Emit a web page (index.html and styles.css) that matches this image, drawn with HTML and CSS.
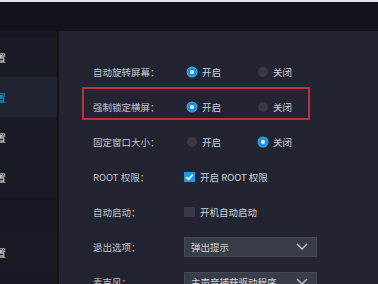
FILE: index.html
```html
<!DOCTYPE html>
<html lang="zh-CN">
<head>
<meta charset="utf-8">
<title>设置</title>
<link rel="stylesheet" href="styles.css">
</head>
<body>
<div class="topline"></div>
<div class="header"></div>
<div class="main">
  <nav class="sidebar">
    <div class="nav-item"><span class="nav-text">基本设置</span></div>
    <div class="nav-item active"><span class="nav-text">高级设置</span></div>
    <div class="nav-item"><span class="nav-text">性能设置</span></div>
    <div class="nav-item"><span class="nav-text">游戏设置</span></div>
    <div class="nav-gap"></div>
    <div class="nav-item"><span class="nav-text">其他设置</span></div>
  </nav>
  <section class="content">
    <div class="row">
      <div class="label">自动旋转屏幕：</div>
      <div class="controls">
        <div class="option"><span class="radio on"></span>开启</div>
        <div class="option"><span class="radio"></span>关闭</div>
      </div>
    </div>
    <div class="row highlighted">
      <div class="label">强制锁定横屏：</div>
      <div class="controls">
        <div class="option"><span class="radio on"></span>开启</div>
        <div class="option"><span class="radio"></span>关闭</div>
      </div>
    </div>
    <div class="row">
      <div class="label">固定窗口大小：</div>
      <div class="controls">
        <div class="option"><span class="radio"></span>开启</div>
        <div class="option"><span class="radio on"></span>关闭</div>
      </div>
    </div>
    <div class="row">
      <div class="label">ROOT 权限：</div>
      <div class="controls">
        <div class="check-option"><span class="checkbox on"><svg viewBox="0 0 11 10" width="11" height="10"><path d="M2.3 5.2 L4.5 7.3 L8.8 2.6" fill="none" stroke="#ffffff" stroke-width="1.6"/></svg></span>开启 ROOT 权限</div>
      </div>
    </div>
    <div class="row">
      <div class="label">自动启动：</div>
      <div class="controls">
        <div class="check-option"><span class="checkbox"></span>开机自动启动</div>
      </div>
    </div>
    <div class="row">
      <div class="label">退出选项：</div>
      <div class="controls">
        <div class="select"><span>弹出提示</span><svg class="chev" viewBox="0 0 12 7" width="12" height="7"><path d="M1 1 L6 6 L11 1" fill="none" stroke="#c9ccd4" stroke-width="1.3"/></svg></div>
      </div>
    </div>
    <div class="row">
      <div class="label">麦克风：</div>
      <div class="controls">
        <div class="select"><span>主声音捕获驱动程序</span><svg class="chev" viewBox="0 0 12 7" width="12" height="7"><path d="M1 1 L6 6 L11 1" fill="none" stroke="#c9ccd4" stroke-width="1.3"/></svg></div>
      </div>
    </div>
  </section>
</div>
</body>
</html>
```

FILE: styles.css
```css
html, body {
  margin: 0;
  padding: 0;
}
body {
  width: 378px;
  height: 284px;
  overflow: hidden;
  background: #11131b;
  font-family: "Noto Sans CJK SC", "Noto Sans", sans-serif;
  font-size: 9.5px;
  color: #c2c4cb;
}
.topline {
  height: 2px;
  background: #e6e7ea;
}
.header {
  height: 29px;
  background: #12141c;
}
.main {
  display: flex;
  height: 253px;
  overflow: hidden;
}
.sidebar {
  width: 57px;
  margin-right: 2px;
  background: #161821;
  padding-top: 6px;
  display: flex;
  flex-direction: column;
}
.nav-item {
  height: 40px;
  flex: none;
  display: flex;
  align-items: center;
  overflow: hidden;
  background: #181a24;
  color: #e2e3e7;
  font-size: 10px;
}
.nav-item.active {
  background: #212433;
  color: #2a9be0;
}
.nav-text {
  margin-left: -34px;
  white-space: nowrap;
}
.nav-gap {
  height: 35px;
  flex: none;
}
.content {
  flex: 1;
  background: #222531;
  padding: 23px 0 0 34px;
  display: flex;
  flex-direction: column;
  overflow: hidden;
}
.row {
  height: 35px;
  flex: none;
  display: flex;
  align-items: center;
  position: relative;
}
.row.highlighted::after {
  content: "";
  position: absolute;
  left: -11px;
  top: -2px;
  width: 224px;
  height: 29px;
  border: 2px solid #b8333b;
}
.label {
  width: 91px;
  white-space: nowrap;
}
.controls {
  display: flex;
  align-items: center;
}
.option {
  width: 68px;
  margin-left: 3px;
  display: flex;
  align-items: center;
  gap: 5px;
  color: #d0d2d8;
}
.radio {
  width: 10px;
  height: 10px;
  border-radius: 50%;
  background: #383b47;
  display: flex;
  align-items: center;
  justify-content: center;
}
.radio.on {
  background: #2394dc;
  box-shadow: 0 0 0 0.5px #49aeea;
}
.radio.on::after {
  content: "";
  width: 4px;
  height: 4px;
  border-radius: 50%;
  background: #eaf6ff;
}
.check-option {
  display: flex;
  align-items: center;
  gap: 5px;
  color: #d0d2d8;
}
.checkbox {
  width: 11px;
  height: 10px;
  background: #383b47;
  display: flex;
}
.checkbox.on {
  background: #2596dc;
}
.select {
  width: 117px;
  height: 18px;
  background: #393d4a;
  border: 1px solid #454957;
  display: flex;
  align-items: center;
  justify-content: space-between;
  padding: 0 8px 0 6px;
  color: #d2d4da;
}
.chev {
  display: block;
}
```
